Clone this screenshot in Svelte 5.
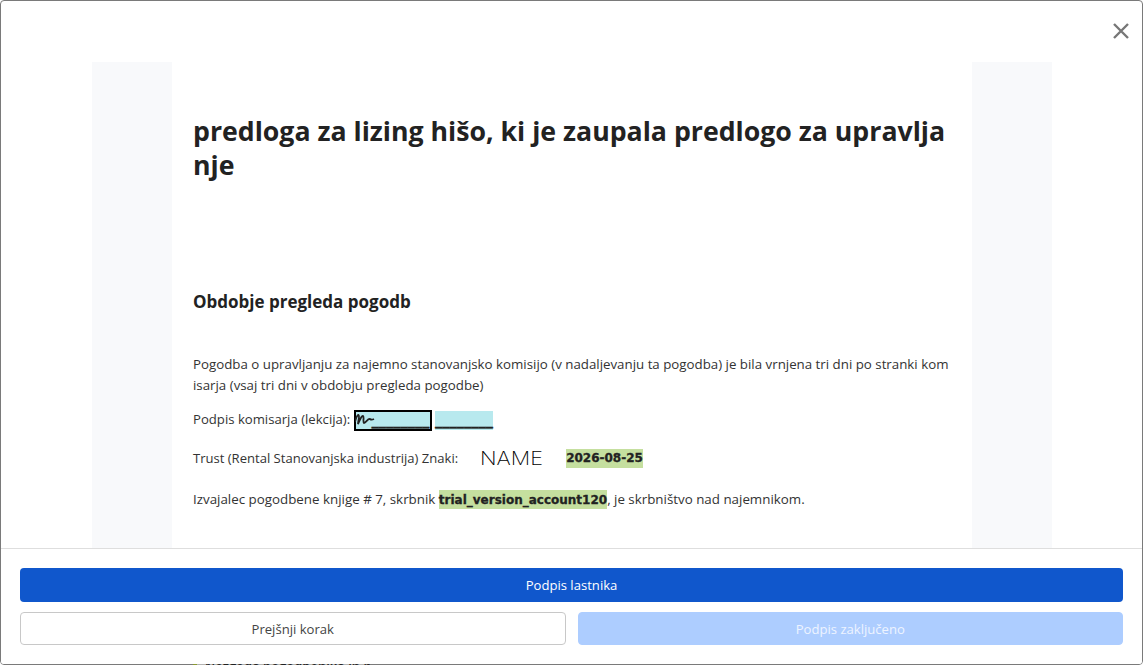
<script>
  let agreementNo = 7;
  let account = 'trial_version_account120';
  let signedOn = '2026-08-25';
</script>

<div class="window">
  <div class="modal">
    <button class="close" aria-label="Zapri">
      <svg width="18" height="18" viewBox="0 0 18 18"><path d="M2 2 L16 16 M16 2 L2 16" /></svg>
    </button>

    <div class="scroll">
      <div class="sheet">
        <div class="page">
          <h1>predloga za lizing hišo, ki je zaupala predlogo za upravljanje</h1>
          <h2>Obdobje pregleda pogodb</h2>
          <p class="intro">Pogodba o upravljanju za najemno stanovanjsko komisijo (v nadaljevanju ta pogodba) je bila vrnjena tri dni po stranki komisarja (vsaj tri dni v obdobju pregleda pogodbe)</p>

          <p class="line sign-line">
            Podpis komisarja (lekcija):
            <span class="field active">
              <svg class="scribble" width="24" height="17" viewBox="0 0 24 17"><path d="M0 10 C1 6 2 3 3.5 3 C5 4 3 9 3 12 C5 8 6 4 8 4 C9.5 5 7.5 10 9 11 C11 11 13 6 15 7 C16 8 17 8 19 7" /></svg>
              <span class="rule short">________</span>
            </span>
            <span class="field"><span class="rule">________</span></span>
          </p>

          <p class="line trust-line">
            Trust (Rental Stanovanjska industrija) Znaki:
            <span class="sig-name">NAME</span>
            <span class="mark date">{signedOn}</span>
          </p>

          <p class="line last-line">Izvajalec pogodbene knjige # {agreementNo}, skrbnik <span class="mark">{account}</span>, je skrbništvo nad najemnikom.</p>
        </div>
      </div>
    </div>

    <div class="footer">
      <button class="btn primary">Podpis lastnika</button>
      <div class="row">
        <button class="btn outline">Prejšnji korak</button>
        <button class="btn disabled" disabled>Podpis zaključeno</button>
      </div>
    </div>
  </div>

  <!-- one pixel of the document shows through under the dialog edge -->
  <div class="peek"><span class="dot"></span><span class="peek-text">Nezgoda pogodbenika in najemnika</span></div>
</div>

<style>
  :global(body) {
    margin: 0;
    background: #fff;
  }

  .window {
    position: relative;
    height: 665px;
    overflow: hidden;
  }

  .modal {
    position: relative;
    height: 665px;
    box-sizing: border-box;
    border: 1px solid #7a7a7a;
    border-radius: 4px;
    background: #fff;
    overflow: hidden;
    font-family: "Open Sans", "Noto Sans", sans-serif;
    color: #333;
  }

  .close {
    position: absolute;
    top: 21px;
    right: 12px;
    width: 18px;
    height: 18px;
    padding: 0;
    border: none;
    background: none;
    cursor: pointer;
    z-index: 2;
  }

  .close svg {
    display: block;
  }

  .close path {
    stroke: #777;
    stroke-width: 2.4;
    fill: none;
  }

  .scroll {
    height: 100%;
    overflow: hidden;
    padding-top: 61px;
    box-sizing: border-box;
  }

  .sheet {
    width: 960px;
    margin-left: 91px;
    padding: 0 80px;
    box-sizing: border-box;
    background: #f8f9fb;
  }

  .page {
    background: #fff;
    padding: 52px 21px 0;
    height: 640px;
    box-sizing: border-box;
    word-break: break-all;
  }

  h1 {
    margin: 0;
    font-size: 26.7px;
    line-height: 34px;
    font-weight: 700;
    color: #222;
  }

  h2 {
    margin: 108px 0 0;
    font-size: 17px;
    line-height: 24px;
    font-weight: 700;
    color: #222;
  }

  .intro {
    margin: 40px 0 0;
    font-size: 13.3px;
    line-height: 21px;
  }

  .line {
    margin: 0;
    font-size: 13.15px;
    line-height: 21px;
  }

  .sign-line {
    margin-top: 13px;
  }

  .trust-line {
    margin-top: 17px;
    display: flex;
    align-items: center;
    font-size: 13.05px;
  }

  .last-line {
    margin-top: 20px;
    font-size: 13.35px;
  }

  .field {
    display: inline-block;
    position: relative;
    height: 19px;
    line-height: 19px;
    background: #b8e9ee;
    vertical-align: middle;
    color: #222;
    white-space: nowrap;
  }

  .field.active {
    width: 74px;
    height: 17px;
    border: 2px solid #000;
  }

  .scribble {
    position: absolute;
    left: -1px;
    top: 0;
  }

  .scribble path {
    fill: none;
    stroke: #222;
    stroke-width: 1.8;
  }

  .rule {
    font-family: "DejaVu Sans", sans-serif;
    font-weight: 700;
    font-size: 14.5px;
    -webkit-text-stroke: 0.3px #222;
  }

  .rule.short {
    position: absolute;
    right: 0;
    bottom: 0;
    line-height: 17px;
  }

  .sig-name {
    margin-left: 22px;
    width: 64px;
    flex: none;
    font-family: Inter, Lato, sans-serif;
    font-weight: 200;
    font-size: 19px;
    line-height: 21px;
    transform: scaleX(1.14);
    transform-origin: left center;
    color: #000;
  }

  .mark {
    background: #c5df9f;
    font-family: "DejaVu Sans", sans-serif;
    font-weight: 700;
    font-size: 12px;
    padding: 2.5px 0;
    color: #222;
    -webkit-text-stroke: 0.3px #222;
  }

  .date {
    margin-left: 22px;
    padding: 0;
    line-height: 19px;
  }

  .footer {
    position: absolute;
    left: 0;
    right: 0;
    top: 547px;
    bottom: 0;
    box-sizing: border-box;
    padding: 19px 19px 0;
    background: #fff;
    border-top: 1px solid #dedede;
    display: flex;
    flex-direction: column;
    gap: 10px;
  }

  .row {
    display: flex;
    gap: 12px;
  }

  .btn {
    flex: 1;
    font-family: "Open Sans", "Noto Sans", sans-serif;
    font-size: 13.1px;
    border-radius: 4px;
    cursor: pointer;
  }

  .primary {
    flex: none;
    height: 34px;
    background: #1057cc;
    border: none;
    color: #fff;
  }

  .outline {
    height: 33px;
    background: #fff;
    border: 1px solid #c8c8c8;
    color: #444;
  }

  .disabled {
    height: 33px;
    background: #adcdff;
    border: 1px solid #adcdff;
    color: #eef4ff;
    cursor: default;
  }

  .peek {
    position: absolute;
    left: 193px;
    bottom: 0;
    width: 177px;
    height: 1px;
    box-sizing: border-box;
    overflow: hidden;
    display: flex;
    background: #b4b4b4;
    font-family: "Open Sans", "Noto Sans", sans-serif;
    font-size: 13px;
    font-weight: 600;
    line-height: 13px;
    white-space: nowrap;
    color: #222;
  }

  .dot {
    flex: none;
    width: 4px;
    height: 1px;
    margin-right: 8px;
    background: #8a9a30;
  }

  .peek-text {
    margin-top: -4px;
  }
</style>
